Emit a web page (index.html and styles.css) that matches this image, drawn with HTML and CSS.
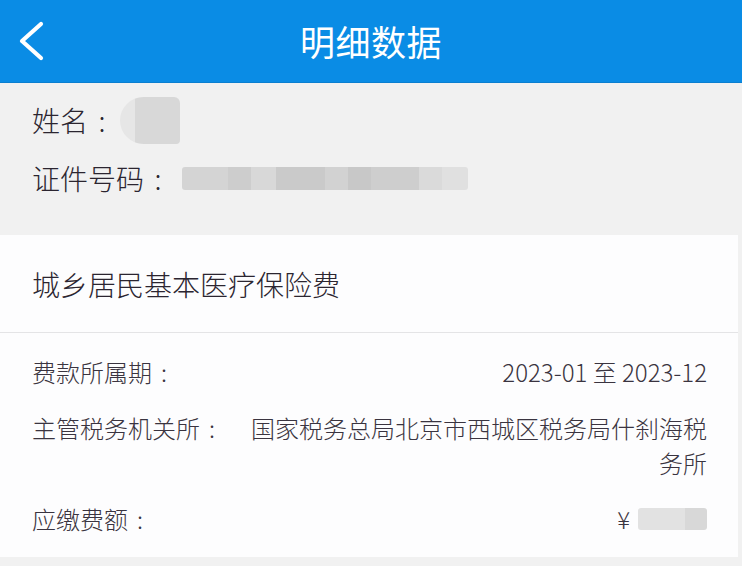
FILE: index.html
```html
<!DOCTYPE html>
<html lang="zh-CN">
<head>
<meta charset="utf-8">
<title>明细数据</title>
<link rel="stylesheet" href="styles.css">
</head>
<body>
<header class="topbar">
  <span class="back">
    <svg width="30" height="40" viewBox="0 0 30 40"><path d="M23 3 L4 20 L23 37" fill="none" stroke="#fff" stroke-width="4.2" stroke-linecap="round" stroke-linejoin="round"/></svg>
  </span>
  <h1 class="title">明细数据</h1>
</header>
<section class="person">
  <div class="prow"><span class="plabel">姓名<span class="colon">:</span></span><span class="blur-name"></span></div>
  <div class="prow"><span class="plabel">证件号码<span class="colon">:</span></span><span class="blur-id"></span></div>
</section>
<section class="card">
  <div class="card-title">城乡居民基本医疗保险费</div>
  <div class="details">
    <div class="drow"><span class="dlabel">费款所属期<span class="colon">:</span></span><span class="dvalue">2023-01 至 2023-12</span></div>
    <div class="drow"><span class="dlabel">主管税务机关所<span class="colon">:</span></span><span class="dvalue">国家税务总局北京市西城区税务局什刹海税务所</span></div>
    <div class="drow"><span class="dlabel">应缴费额<span class="colon">:</span></span><span class="dvalue amount">¥<span class="blur-amt"></span></span></div>
  </div>
</section>
</body>
</html>
```
FILE: styles.css
```css
* { box-sizing: border-box; margin: 0; padding: 0; }
html, body { width: 742px; height: 566px; overflow: hidden; }
body {
  background: #f1f1f1;
  font-family: "Noto Sans CJK SC", "Noto Sans", sans-serif;
  font-weight: 300;
  color: #2b2530;
}
.colon {
  display: inline-block;
  width: 1em;
  text-align: center;
}
.topbar {
  height: 83px;
  background: #0a8ce5;
  border-bottom: 1px solid #0a7fd0;
  display: flex;
  align-items: center;
  justify-content: center;
  position: relative;
}
.back {
  position: absolute;
  left: 18px;
  top: 21px;
  width: 30px;
  height: 40px;
}
.back svg { display: block; }
.title {
  color: #fff;
  font-size: 35px;
  font-weight: 400;
  letter-spacing: 0.5px;
  line-height: 1;
  margin-top: -2px;
}
.person {
  height: 152px;
  padding: 8px 0 0 32px;
  display: flex;
  flex-direction: column;
}
.prow {
  height: 58px;
  display: flex;
  align-items: center;
  font-size: 28px;
  line-height: 1;
}
.plabel { color: #2b2530; }
.blur-name {
  display: block;
  width: 60px;
  height: 47px;
  margin-left: 4px;
  border-radius: 24px 6px 4px 24px;
  background: linear-gradient(90deg, #e6e6e6 0 25%, #d8d8d8 25% 100%);
}
.blur-id {
  display: block;
  width: 286px;
  height: 23px;
  margin-left: 10px;
  border-radius: 3px;
  background: linear-gradient(90deg, #d4d4d4 0 16%, #cdcdcd 16% 24%, #d8d8d8 24% 33%, #cacaca 33% 50%, #d2d2d2 50% 58%, #c8c8c8 58% 66%, #cecece 66% 83%, #dadada 83% 91%, #e0e0e0 91% 100%);
}
.card {
  background: #fdfdfe;
  margin-right: 4px;
}
.card-title {
  height: 98px;
  display: flex;
  align-items: center;
  padding-left: 32px;
  font-size: 28px;
  border-bottom: 1px solid #e4e4e6;
}
.details {
  padding: 21px 31px 21px 32px;
  display: flex;
  flex-direction: column;
  gap: 21px;
  font-size: 24px;
  line-height: 35px;
  color: #3a3440;
}
.drow {
  display: flex;
  justify-content: space-between;
  align-items: flex-start;
}
.dlabel { flex-shrink: 0; }
.dvalue { margin-left: 24px; text-align: right; }
.amount { display: flex; align-items: center; }
.blur-amt {
  display: inline-block;
  width: 69px;
  height: 22px;
  margin-left: 8px;
  border-radius: 3px;
  background: linear-gradient(90deg, #e2e2e2 0 68%, #d8d8d8 68% 100%);
}
```
